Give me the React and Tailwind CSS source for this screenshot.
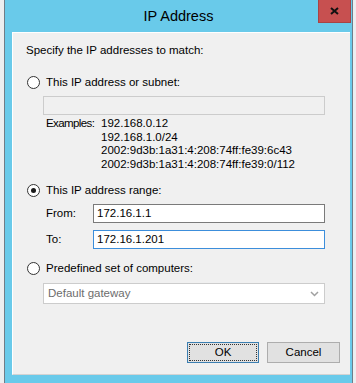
import React from 'react';

const font = { fontFamily: '"Liberation Sans", Arial, sans-serif' };

const Radio = ({ checked, label }) => (
    <div className="flex items-center h-[15px]">
        <span className="w-[13px] h-[13px] rounded-full border border-[#333] bg-white flex items-center justify-center ml-[1px] shrink-0">
            {checked && <span className="w-[5px] h-[5px] rounded-full bg-[#1a1a1a]"></span>}
        </span>
        <span className="ml-[6px]">{label}</span>
    </div>
);

const App = () => {
    return (
        <div className="w-[356px] h-[383px] bg-[#eceef0] pl-[4px] pr-[3px] overflow-hidden" style={font}>
            <div className="h-full bg-[#69caea] border-l border-r border-[#6f7d88] flex flex-col">
                {/* title bar */}
                <div className="relative h-[32px] flex items-center justify-center">
                    <span className="text-[14.5px] text-black mt-[2px]">IP Address</span>
                    <div className="absolute right-[1px] top-0 w-[33px] h-[23px] bg-[#c75050] border border-[#a84444] border-t-0 flex items-center justify-center">
                        <svg width="9" height="8" viewBox="0 0 9 8">
                            <path d="M1 1 L8 7 M8 1 L1 7" stroke="#111" strokeWidth="2" />
                        </svg>
                    </div>
                </div>

                {/* content panel */}
                <div className="ml-[7px] mr-[2px] h-[343px] bg-[#f0f0f0] border-t border-l border-white border-b border-b-[#d3d3d3] pl-[13px] pr-[10px] pt-[10px] text-[11.5px] text-black flex flex-col">
                    <div className="leading-[15px]">Specify the IP addresses to match:</div>

                    <div className="mt-[17px]">
                        <Radio label="This IP address or subnet:" />
                    </div>
                    <div className="mt-[6px] ml-[17px] w-[282px] h-[19px] border border-[#cccccc] bg-[#f0f0f0]"></div>

                    <div className="mt-[2px] ml-[20px] flex leading-[13.5px]">
                        <span className="w-[55px] shrink-0 whitespace-nowrap tracking-[-0.6px]">Examples:</span>
                        <div className="flex flex-col">
                            <span>192.168.0.12</span>
                            <span>192.168.1.0/24</span>
                            <span>2002:9d3b:1a31:4:208:74ff:fe39:6c43</span>
                            <span>2002:9d3b:1a31:4:208:74ff:fe39:0/112</span>
                        </div>
                    </div>

                    <div className="mt-[12px]">
                        <Radio checked label="This IP address range:" />
                    </div>
                    <div className="mt-[6px] ml-[20px] flex items-center">
                        <span className="w-[47px]">From:</span>
                        <div className="w-[232px] h-[19px] border border-[#7a7a7a] bg-white flex items-center pl-[3px]">172.16.1.1</div>
                    </div>
                    <div className="mt-[7px] ml-[20px] flex items-center">
                        <span className="w-[47px]">To:</span>
                        <div className="w-[232px] h-[19px] border border-[#3c8edb] bg-white flex items-center pl-[3px]">172.16.1.201</div>
                    </div>

                    <div className="mt-[12px]">
                        <Radio label="Predefined set of computers:" />
                    </div>
                    <div className="mt-[7px] ml-[17px] w-[282px] h-[21px] border border-[#cccccc] bg-white flex items-center justify-between pl-[4px] pr-[5px] text-[#6d6d6d]">
                        <span>Default gateway</span>
                        <svg width="9" height="6" viewBox="0 0 9 6">
                            <path d="M1 1 L4.5 4.5 L8 1" stroke="#a0a0a0" strokeWidth="1.5" fill="none" />
                        </svg>
                    </div>

                    <div className="mt-[38px] flex justify-end gap-[8px]">
                        <button className="w-[72px] h-[21px] bg-[#e1e1e1] border border-[#3c7fb1] p-[1px]">
                            <div className="w-full h-full border border-dotted border-[#333] flex items-center justify-center leading-none">OK</div>
                        </button>
                        <button className="w-[73px] h-[21px] bg-[#e1e1e1] border border-[#adadad] flex items-center justify-center leading-none">Cancel</button>
                    </div>
                </div>
            </div>
        </div>
    );
};

export default App;
